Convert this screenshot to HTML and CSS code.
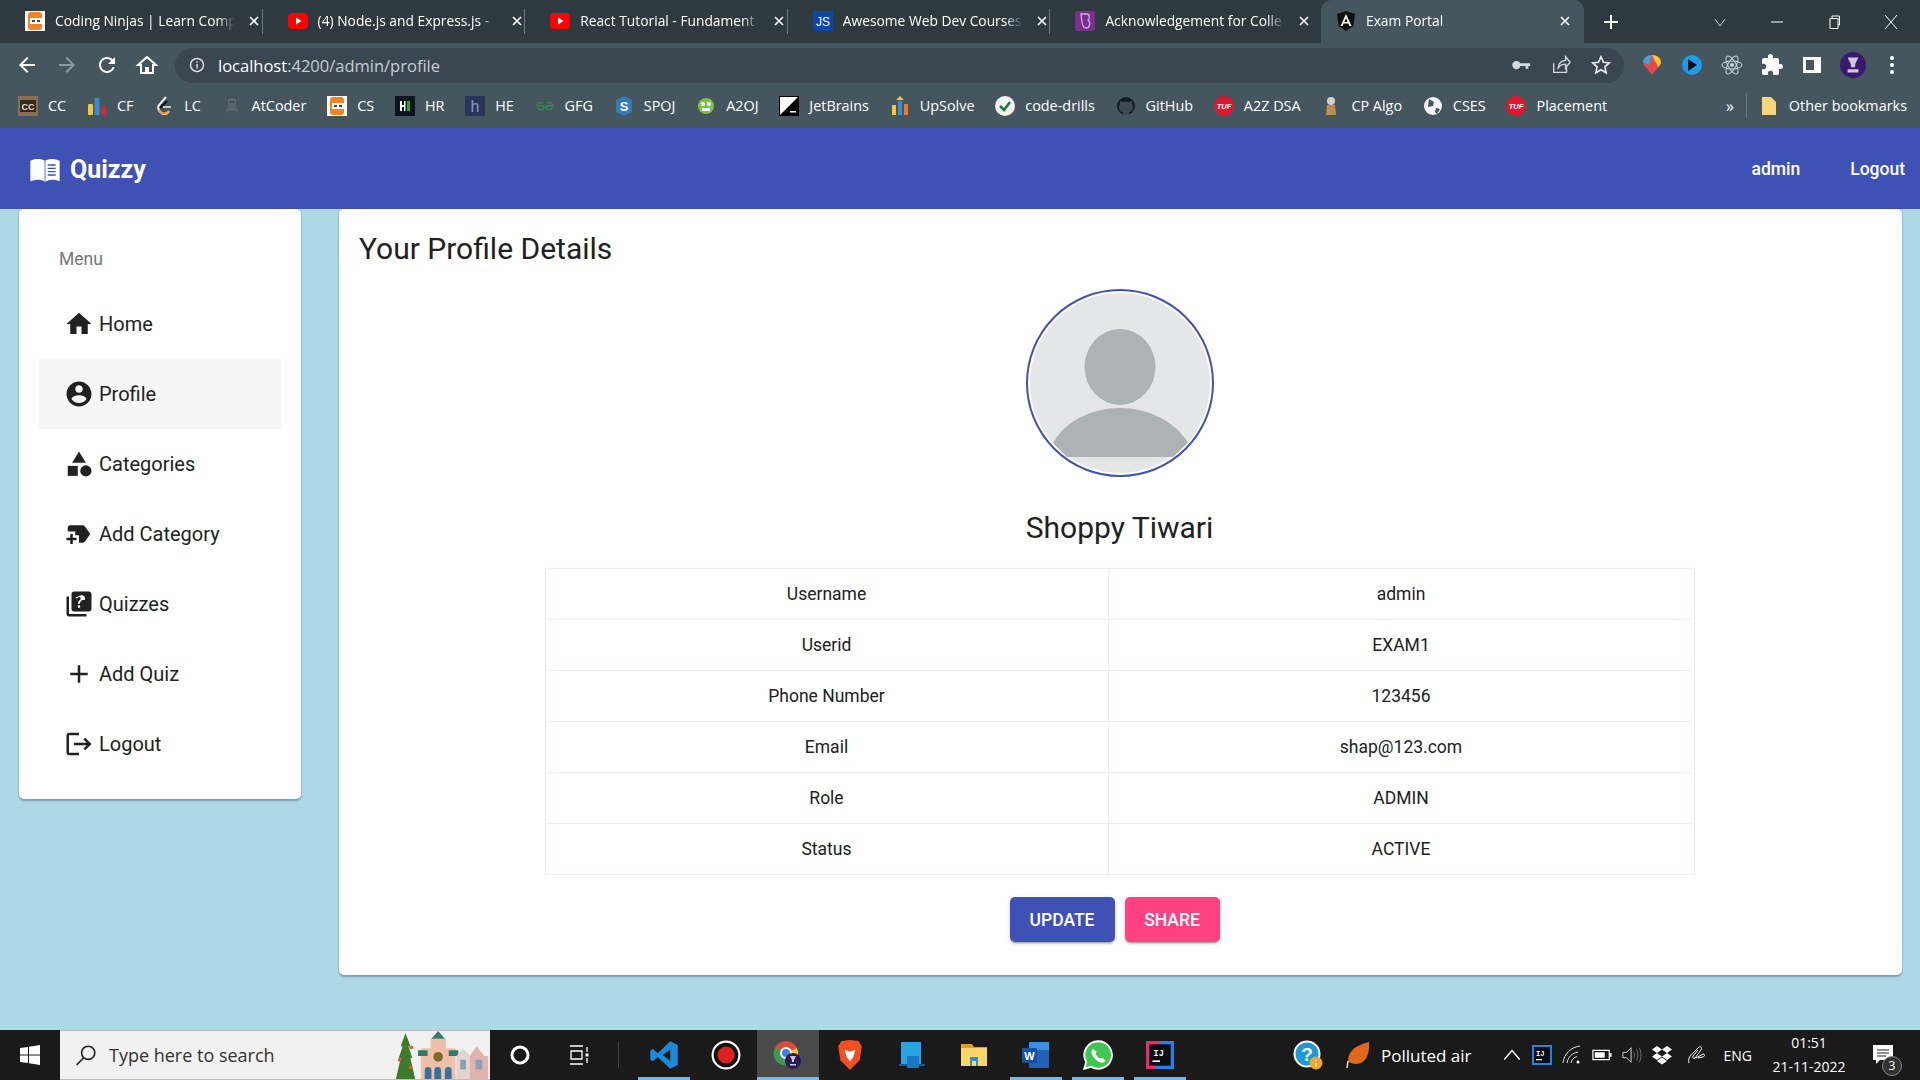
FILE: index.html
```html
<!DOCTYPE html>
<html lang="en">
<head>
  <meta charset="UTF-8">
  <meta name="viewport" content="width=device-width, initial-scale=1.0">
  <title>Exam Portal</title>
  <link rel="stylesheet" href="styles.css">
</head>
<body>

<svg class="defs" width="0" height="0">
  <symbol id="ic-ninja" viewBox="0 0 20 20"><rect width="20" height="20" fill="#fff"/><rect x="3" y="1" width="14" height="18" rx="3" fill="#f58220"/><rect x="5" y="7" width="15" height="6" fill="#fff"/><path d="M7 9h3v2H7zM12 9h3v2h-3z" fill="#444"/></symbol>
  <symbol id="ic-yt" viewBox="0 0 20 20"><rect y="2" width="20" height="16" rx="4" fill="#f00"/><path d="M8 6.500l5.500 3.500L8 13.500z" fill="#fff"/></symbol>
  <symbol id="ic-tuf" viewBox="0 0 20 20"><circle cx="10" cy="10" r="10" fill="#e2162f"/><text x="10" y="12.500" font-size="7.500" font-weight="700" font-style="italic" fill="#fff" text-anchor="middle" font-family="Liberation Sans">TUF</text></symbol>
  <symbol id="ic-close" viewBox="0 0 12 12"><path d="M2 2l8 8M10 2l-8 8" stroke="#fff" stroke-width="1.600" fill="none"/></symbol>
</svg>

<div class="tabstrip">
  <div class="tab"><svg class="fav"><use href="#ic-ninja"/></svg><span class="tab-title">Coding Ninjas | Learn Comp</span><svg class="tab-x"><use href="#ic-close"/></svg></div>
  <div class="tab"><svg class="fav"><use href="#ic-yt"/></svg><span class="tab-title">(4) Node.js and Express.js -</span><svg class="tab-x"><use href="#ic-close"/></svg></div>
  <div class="tab"><svg class="fav"><use href="#ic-yt"/></svg><span class="tab-title">React Tutorial - Fundament</span><svg class="tab-x"><use href="#ic-close"/></svg></div>
  <div class="tab">
    <svg class="fav" viewBox="0 0 20 20"><rect width="20" height="20" fill="#0a47a8"/><text x="10" y="15" font-size="12" fill="#fff" text-anchor="middle" font-family="Liberation Sans">JS</text></svg>
    <span class="tab-title">Awesome Web Dev Courses</span><svg class="tab-x"><use href="#ic-close"/></svg>
  </div>
  <div class="tab tab-nosep">
    <svg class="fav" viewBox="0 0 20 20"><rect width="20" height="20" rx="2" fill="#7b2f8e"/><path d="M6 3h6c3 0 3 5 1 6 3 2 2 8-2 8-3 0-4-3-5-14z" fill="none" stroke="#d9a9e6" stroke-width="1.300"/></svg>
    <span class="tab-title">Acknowledgement for Colle</span><svg class="tab-x"><use href="#ic-close"/></svg>
  </div>
  <div class="tab tab-active">
    <svg class="fav" viewBox="0 0 20 20"><path d="M10 0l9 3-1.500 12L10 20l-7.500-5L1 3z" fill="#111"/><path d="M10 3l5.500 12h-2l-1-2.500h-5l-1 2.500h-2zM10 7l-1.700 4h3.400z" fill="#fff"/></svg>
    <span class="tab-title">Exam Portal</span><svg class="tab-x"><use href="#ic-close"/></svg>
  </div>
  <svg class="newtab" viewBox="0 0 16 16"><path d="M8 1v14M1 8h14" stroke="#fff" stroke-width="2"/></svg>
  <div class="winctl">
    <svg class="win-ic win-chev" viewBox="0 0 14 14"><path d="M2 4l5 7 5-7" stroke="#c9d0d4" fill="none"/></svg>
    <svg class="win-ic" viewBox="0 0 14 14"><path d="M1 7h12" stroke="#fff"/></svg>
    <svg class="win-ic" viewBox="0 0 14 14"><path d="M3 3.500h8v10H3zM5 3.500V1h7.500v9H11" stroke="#fff" fill="none"/></svg>
    <svg class="win-ic win-x" viewBox="0 0 14 14"><path d="M1 0l12 14M13 0L1 14" stroke="#fff" fill="none"/></svg>
  </div>
</div>

<div class="toolbar">
  <svg class="tool" viewBox="0 0 24 24"><path d="M20 11H7.800l5.600-5.600L12 4l-8 8 8 8 1.400-1.400L7.800 13H20z" fill="#fff"/></svg>
  <svg class="tool" viewBox="0 0 24 24"><path d="M4 11h12.200l-5.600-5.600L12 4l8 8-8 8-1.400-1.400 5.600-5.600H4z" fill="#8e9aa1"/></svg>
  <svg class="tool" viewBox="0 0 24 24"><path d="M17.650 6.350A8 8 0 1 0 19.700 14h-2.100A6 6 0 1 1 12 6c1.660 0 3.140.69 4.220 1.780L13 11h7V4z" fill="#fff"/></svg>
  <svg class="tool" viewBox="0 0 24 24"><path d="M12 4l-9 8h3v8h5v-5h2v5h5v-8h3z" fill="none" stroke="#fff" stroke-width="2"/></svg>
  <div class="omnibox">
    <svg class="omni-info" viewBox="0 0 16 16"><circle cx="8" cy="8" r="6.500" fill="none" stroke="#d5dadd" stroke-width="1.500"/><path d="M8 7v4.500M8 4.500v1.500" stroke="#d5dadd" stroke-width="1.500"/></svg>
    <span class="url"><span class="url-host">localhost</span>:4200/admin/profile</span>
    <div class="omni-right">
      <svg class="omni-ic" viewBox="0 0 24 24"><circle cx="7" cy="12" r="4.500" fill="#d5dadd"/><path d="M10 10h12v3h-2v3h-3v-3h-7z" fill="#d5dadd"/></svg>
      <svg class="omni-ic" viewBox="0 0 24 24"><path d="M4 10v10h14v-5M9 15c0-5 4-8 8-8V3l5 6-5 6v-4c-3 0-6 1-8 4z" fill="none" stroke="#d5dadd" stroke-width="1.500"/></svg>
      <svg class="omni-ic" viewBox="0 0 24 24"><path d="M12 3l2.700 6 6.300.7-4.700 4.300 1.300 6.500-5.600-3.300-5.600 3.300 1.300-6.500L3 9.700 9.300 9z" fill="none" stroke="#e8ecee" stroke-width="1.800"/></svg>
    </div>
  </div>
  <div class="ext-row">
    <svg class="ext" viewBox="0 0 24 24"><path d="M12 22C8 16 3 13 3 9a9 7 0 0 1 18 0c0 4-5 7-9 13z" fill="#e5484d"/><path d="M12 2a9 7 0 0 1 9 7c0 2-1 3-3 5L12 2z" fill="#f7c52d"/><path d="M3 9a9 7 0 0 1 9-7l-3 10z" fill="#3aa6dd"/></svg>
    <svg class="ext" viewBox="0 0 24 24"><circle cx="12" cy="12" r="10" fill="#1a9bf0"/><path d="M8 6l9 6-9 6z" fill="#111"/></svg>
    <svg class="ext" viewBox="0 0 24 24"><g fill="none" stroke="#cfd6da"><ellipse cx="12" cy="12" rx="10" ry="4"/><ellipse cx="12" cy="12" rx="10" ry="4" transform="rotate(60 12 12)"/><ellipse cx="12" cy="12" rx="10" ry="4" transform="rotate(120 12 12)"/></g><circle cx="12" cy="12" r="2" fill="#cfd6da"/></svg>
    <svg class="ext" viewBox="0 0 24 24"><path d="M20.500 11H19V7c0-1.100-.9-2-2-2h-4V3.500a2.500 2.500 0 0 0-5 0V5H4c-1.100 0-2 .9-2 2v3.800h1.500a2.700 2.700 0 0 1 0 5.400H2V20c0 1.100.9 2 2 2h3.800v-1.500a2.700 2.700 0 0 1 5.400 0V22H17c1.100 0 2-.9 2-2v-4h1.500a2.500 2.500 0 0 0 0-5z" fill="#fff"/></svg>
    <svg class="ext" viewBox="0 0 24 24"><path d="M3 4h18v16H3zM6 7v10h8V7z" fill="#fff" fill-rule="evenodd"/></svg>
    <svg class="ext ext-avatar" viewBox="0 0 24 24"><circle cx="12" cy="12" r="12" fill="#3a1a6e"/><path d="M7 5h10l-3 6v3h-4v-3zM7 16h10v3H7z" fill="#cfc8dc"/></svg>
    <svg class="ext ext-kebab" viewBox="0 0 24 24"><circle cx="12" cy="5" r="2" fill="#fff"/><circle cx="12" cy="12" r="2" fill="#fff"/><circle cx="12" cy="19" r="2" fill="#fff"/></svg>
  </div>
</div>

<div class="bookmarks">
  <span class="bm"><svg class="bm-ic" viewBox="0 0 20 20"><rect width="20" height="20" fill="#8a6f52"/><rect x="2" y="4" width="16" height="12" fill="#332a20"/><text x="10" y="14" font-size="9" font-weight="700" fill="#e7ddd0" text-anchor="middle" font-family="Liberation Sans">CC</text></svg>CC</span>
  <span class="bm"><svg class="bm-ic" viewBox="0 0 20 20"><rect x="1" y="8" width="5" height="11" rx="1" fill="#f6c43d"/><rect x="7.500" y="2" width="5" height="17" rx="1" fill="#3b8ad6"/><rect x="14" y="10" width="5" height="9" rx="1" fill="#c62e2e"/></svg>CF</span>
  <span class="bm"><svg class="bm-ic" viewBox="0 0 20 20"><path d="M12 1L5 9c-2 3 0 8 5 9 2 0 4-1 5-3" fill="none" stroke="#f2f2f2" stroke-width="2"/><path d="M13 5L6 12" stroke="#111" stroke-width="2"/><path d="M9 11h8" stroke="#c9c9c9" stroke-width="2"/><path d="M5 14c2 4 7 5 10 1" fill="none" stroke="#f29c1f" stroke-width="2"/></svg>LC</span>
  <span class="bm"><svg class="bm-ic" viewBox="0 0 20 20"><circle cx="10" cy="6" r="4" fill="#5f6a70"/><path d="M3 18l4-10h6l4 10-4-3H7z" fill="#59646a"/><circle cx="8.500" cy="6" r="1" fill="#2e363a"/><circle cx="11.500" cy="6" r="1" fill="#2e363a"/></svg>AtCoder</span>
  <span class="bm"><svg class="bm-ic"><use href="#ic-ninja"/></svg>CS</span>
  <span class="bm"><svg class="bm-ic" viewBox="0 0 20 20"><rect width="20" height="20" fill="#0e141e"/><path d="M5 5h2v10H5zM9 5h1.500v10H9zM5 9h5v2H5z" fill="#fff"/><rect x="12" y="5" width="3" height="10" fill="#1ba94c"/></svg>HR</span>
  <span class="bm"><svg class="bm-ic" viewBox="0 0 20 20"><rect width="20" height="20" fill="#2a3459"/><text x="10" y="16" font-size="16" fill="#8e9ac0" text-anchor="middle" font-family="Liberation Sans">h</text></svg>HE</span>
  <span class="bm"><svg class="bm-ic" viewBox="0 0 20 20"><g fill="none" stroke="#2f8d46" stroke-width="1.500"><path d="M9 10H2a4 4 0 0 1 6-3M2.500 12a4 4 0 0 0 6.500 0v-2"/><path d="M11 10h7a4 4 0 0 0-6-3M17.500 12a4 4 0 0 1-6.500 0v-2"/></g></svg>GFG</span>
  <span class="bm"><svg class="bm-ic" viewBox="0 0 20 20"><path d="M10 0l8 4v12l-8 4-8-4V4z" fill="#337ab7"/><text x="10" y="15" font-size="13" font-weight="700" fill="#fff" text-anchor="middle" font-family="Liberation Sans">S</text></svg>SPOJ</span>
  <span class="bm"><svg class="bm-ic" viewBox="0 0 20 20"><circle cx="10" cy="10" r="8" fill="#7ec242"/><circle cx="7" cy="8" r="2" fill="#fff"/><circle cx="13" cy="8" r="2" fill="#fff"/><rect x="6" y="12" width="8" height="3" fill="#fff"/></svg>A2OJ</span>
  <span class="bm"><svg class="bm-ic" viewBox="0 0 20 20"><rect width="20" height="20" fill="#000"/><path d="M1 1h18L1 19z" fill="#fff"/><rect x="11" y="15" width="6" height="1.500" fill="#fff"/></svg>JetBrains</span>
  <span class="bm"><svg class="bm-ic" viewBox="0 0 20 20"><rect x="2" y="9" width="4" height="10" fill="#f6c43d"/><rect x="8" y="5" width="4" height="14" fill="#3b8ad6"/><rect x="14" y="8" width="4" height="11" fill="#e8792b"/><path d="M10 0l4 4h-8z" fill="#f6c43d"/></svg>UpSolve</span>
  <span class="bm"><svg class="bm-ic" viewBox="0 0 20 20"><circle cx="10" cy="10" r="10" fill="#f2f2f2"/><path d="M5 10l4 4 6-8" fill="none" stroke="#1d7a3a" stroke-width="2.500"/></svg>code-drills</span>
  <span class="bm"><svg class="bm-ic" viewBox="0 0 20 20"><circle cx="10" cy="10" r="9" fill="#171b1f"/><path d="M7 19v-3c-3 0-4-2-4-5 0-1 .5-2 1-3V5l3 1c2-.5 4-.5 6 0l3-1v3c.5 1 1 2 1 3 0 3-1 5-4 5v3z" fill="#3c4a52"/></svg>GitHub</span>
  <span class="bm"><svg class="bm-ic"><use href="#ic-tuf"/></svg>A2Z DSA</span>
  <span class="bm"><svg class="bm-ic" viewBox="0 0 20 20"><circle cx="10" cy="5" r="4" fill="#d7cfc4"/><path d="M6 9h8l1 10H5z" fill="#b98e55"/></svg>CP Algo</span>
  <span class="bm"><svg class="bm-ic" viewBox="0 0 20 20"><circle cx="10" cy="10" r="9" fill="#f2f2f2"/><path d="M6 3l5 3-1 4-5 1zM13 12l4 1-3 5-2-2z" fill="#44565f"/></svg>CSES</span>
  <span class="bm"><svg class="bm-ic"><use href="#ic-tuf"/></svg>Placement</span>
  <div class="bm-end">
    <span class="bm-more">»</span>
    <span class="bm-sep"></span>
    <span class="bm"><svg class="bm-ic" viewBox="0 0 20 20"><path d="M3 1h9l5 5v13H3z" fill="#f6d67a"/></svg>Other bookmarks</span>
  </div>
</div>

<nav class="navbar">
  <svg class="brand-ic" viewBox="0 0 24 24"><path d="M21 5c-1.100-.35-2.300-.5-3.500-.5-1.950 0-4.050.4-5.500 1.500-1.450-1.100-3.550-1.500-5.500-1.500S2.450 4.900 1 6v14.650c0 .25.250.5.5.5.100 0 .150-.05.250-.05C3.100 20.450 5.050 20 6.500 20c1.950 0 4.050.4 5.500 1.500 1.350-.85 3.800-1.500 5.500-1.500 1.650 0 3.350.3 4.750 1.050.1.05.15.05.25.05.25 0 .5-.25.5-.5V6c-.6-.45-1.250-.75-2-1z" fill="#fff"/><path d="M14 9h6M14 11.500h6M14 14h6M14 16.500h6" stroke="#3f51b5"/><path d="M12 6v15" stroke="#3f51b5" stroke-width=".6"/></svg>
  <span class="brand">Quizzy</span>
  <span class="nav-link nav-admin">admin</span>
  <span class="nav-link">Logout</span>
</nav>

<div class="page">
  <aside class="sidebar">
    <div class="menu-label">Menu</div>
    <div class="menu-item"><svg class="menu-ic" viewBox="0 0 24 24"><path d="M10 20v-6h4v6h5v-8h3L12 3 2 12h3v8z"/></svg>Home</div>
    <div class="menu-item menu-active"><svg class="menu-ic" viewBox="0 0 24 24"><path d="M12 2C6.480 2 2 6.480 2 12s4.480 10 10 10 10-4.480 10-10S17.520 2 12 2zm0 3c1.660 0 3 1.340 3 3s-1.340 3-3 3-3-1.340-3-3 1.340-3 3-3zm0 14.200c-2.500 0-4.710-1.280-6-3.220.03-1.990 4-3.080 6-3.080 1.990 0 5.970 1.090 6 3.080-1.290 1.940-3.500 3.220-6 3.220z"/></svg>Profile</div>
    <div class="menu-item"><svg class="menu-ic" viewBox="0 0 24 24"><path d="M12 2l-5.500 9h11z"/><circle cx="17.500" cy="17.500" r="4.500"/><path d="M3 13.500h8v8H3z"/></svg>Categories</div>
    <div class="menu-item"><svg class="menu-ic" viewBox="0 0 24 24"><path d="M21 12l-4.370 6.160c-.37.520-.98.840-1.630.840h-3v-6H9v-3H3V7c0-1.100.9-2 2-2h10c.650 0 1.260.320 1.630.840L21 12zM10 15H7v-3H5v3H2v2h3v3h2v-3h3v-2z"/></svg>Add Category</div>
    <div class="menu-item"><svg class="menu-ic" viewBox="0 0 24 24"><path d="M4 6H2v14c0 1.100.9 2 2 2h14v-2H4V6zm16-4H8c-1.100 0-2 .9-2 2v12c0 1.100.9 2 2 2h12c1.100 0 2-.9 2-2V4c0-1.100-.9-2-2-2zm-7.990 13c-.59 0-1.050-.47-1.050-1.050 0-.59.47-1.040 1.050-1.040.59 0 1.040.45 1.040 1.040-.01.58-.45 1.050-1.040 1.050zm2.500-6.170c-.63.930-1.230 1.210-1.560 1.810-.13.240-.18.400-.18 1.180h-1.520c0-.41-.06-1.080.26-1.650.41-.73 1.180-1.160 1.630-1.800.48-.68.210-1.940-1.140-1.940-.88 0-1.320.67-1.500 1.230l-1.370-.57C11.510 5.960 12.520 5 13.990 5c1.230 0 2.080.56 2.510 1.260.37.610.58 1.730.01 2.570z"/></svg>Quizzes</div>
    <div class="menu-item"><svg class="menu-ic" viewBox="0 0 24 24"><path d="M19 13h-6v6h-2v-6H5v-2h6V5h2v6h6v2z"/></svg>Add Quiz</div>
    <div class="menu-item"><svg class="menu-ic" viewBox="0 0 24 24"><path d="M17 7l-1.410 1.410L18.170 11H8v2h10.170l-2.580 2.580L17 17l5-5zM4 5h8V3H4c-1.100 0-2 .9-2 2v14c0 1.100.9 2 2 2h8v-2H4V5z"/></svg>Logout</div>
  </aside>

  <main class="card">
    <h1 class="card-title">Your Profile Details</h1>
    <div class="avatar">
      <svg viewBox="0 0 180 180" class="avatar-svg">
        <circle cx="90" cy="90" r="90" fill="#e4e6e8"/>
        <ellipse cx="90" cy="74" rx="35.500" ry="38" fill="#adb2b5"/>
        <path d="M23 150C35 128 62 115 90 115s55 13 68 35l-15 14H37z" fill="#adb2b5"/>
      </svg>
    </div>
    <h2 class="name">Shoppy Tiwari</h2>
    <table class="details">
      <tbody>
        <tr><td>Username</td><td>admin</td></tr>
        <tr><td>Userid</td><td>EXAM1</td></tr>
        <tr><td>Phone Number</td><td>123456</td></tr>
        <tr><td>Email</td><td>shap@123.com</td></tr>
        <tr><td>Role</td><td>ADMIN</td></tr>
        <tr><td>Status</td><td>ACTIVE</td></tr>
      </tbody>
    </table>
    <div class="actions">
      <button class="btn btn-primary">UPDATE</button>
      <button class="btn btn-accent">SHARE</button>
    </div>
  </main>
</div>

<footer class="taskbar">
  <div class="start"><svg class="start-ic" viewBox="0 0 20 20"><path d="M0 3l8-1v7.500H0zM9 1.800L20 0v9.500H9zM0 10.500h8V18l-8-1zM9 10.500h11V20L9 18.200z" fill="#fff"/></svg></div>
  <div class="search">
    <svg class="search-ic" viewBox="0 0 20 20"><circle cx="12" cy="8" r="6" fill="none" stroke="#222" stroke-width="1.500"/><path d="M8 12.500L1.500 19" stroke="#222" stroke-width="1.500"/></svg>
    <span class="search-text">Type here to search</span>
    <svg class="search-art" viewBox="0 0 95 50">
      <path d="M9 2l5 14h-2l4 12h-2l5 22H-1l5-22H2l4-12H4z" fill="#3d7a2a"/>
      <circle cx="15" cy="17" r="2" fill="#e2562d"/><circle cx="3" cy="30" r="2" fill="#e2562d"/><circle cx="14" cy="38" r="2" fill="#e2562d"/>
      <path d="M25 18h36v32H25z" fill="#eec0a8"/><path d="M35 8h16v12H35z" fill="#eec0a8"/><path d="M43 0l7 8H36z" fill="#2e7d6f"/><path d="M22 20h10v6H22zM54 20h10v6H54z" fill="#2e7d6f"/>
      <circle cx="43" cy="27" r="5" fill="#7b6a2a"/><path d="M29 50v-9a3 3 0 0 1 7 0v9zM39 50v-9a3 3 0 0 1 7 0v9zM50 50v-9a3 3 0 0 1 7 0v9z" fill="#3a6f9c"/>
      <path d="M62 50V26l7-8 7 8v24z" fill="#e4d4cf"/><path d="M76 50V26l7-10 8 10h4v24z" fill="#e0b3ae"/><path d="M66 30h6v10h-6zM82 30h7v10h-7z" fill="#8aa0b5"/>
    </svg>
  </div>
  <div class="task-cell task-small"><svg class="task-ic-sm" viewBox="0 0 20 20"><circle cx="10" cy="10" r="8" fill="none" stroke="#fff" stroke-width="3"/></svg></div>
  <div class="task-cell task-small"><svg class="task-ic-sm" viewBox="0 0 20 20"><path d="M1 1h13M1 19h13M2 6h11v8H2zM18 2v5M18 13v5" fill="none" stroke="#fff" stroke-width="1.300"/><rect x="16.500" y="8.500" width="3" height="3" fill="#fff"/></svg></div>
  <span class="task-sep"></span>
  <div class="task-cell task-open"><svg class="task-ic" viewBox="0 0 24 24"><path d="M17 1l6 3v16l-6 3-10-9.500L3 17l-2-1.500v-7L3 7l4 3.500zm0 6.500L11 12l6 4.500z" fill="#1c8ad8"/></svg></div>
  <div class="task-cell"><svg class="task-ic" viewBox="0 0 28 28"><circle cx="14" cy="14" r="12.500" fill="#111" stroke="#fff" stroke-width="2"/><circle cx="14" cy="14" r="8" fill="#e02020"/></svg></div>
  <div class="task-cell task-open task-active"><svg class="task-ic" viewBox="0 0 30 30"><circle cx="13" cy="13" r="12" fill="#d94c3d"/><path d="M13 13L24 8a12 12 0 0 1-4 15z" fill="#f5c33b"/><path d="M13 13l7 10A12 12 0 0 1 2 8z" fill="#3c9c4e"/><circle cx="13" cy="13" r="5" fill="#3d7fe0" stroke="#fff" stroke-width="2"/><circle cx="20" cy="21" r="8" fill="#2e1a56"/><path d="M17 16h6l-2 4v2h-2v-2zM17 24h6v1.500h-6z" fill="#cfc8dc"/></svg></div>
  <div class="task-cell"><svg class="task-ic" viewBox="0 0 24 28"><path d="M12 0l8 1 3 5-2 13-9 9-9-9L1 6l3-5z" fill="#f04e23"/><path d="M7 9l5 2 5-2-2 7-3 4-3-4z" fill="#fff"/></svg></div>
  <div class="task-cell"><svg class="task-ic" viewBox="0 0 30 30"><path d="M4 2h20v24H4z" fill="#2aa3e0"/><path d="M2 24h26v2H2z" fill="#0d5f9e"/><path d="M10 16h12v12H10z" fill="#1679c2"/></svg></div>
  <div class="task-cell"><svg class="task-ic" viewBox="0 0 30 30"><path d="M2 4h11l2 3h13v19H2z" fill="#e0a21c"/><path d="M2 8h26v18H2z" fill="#fcd56a"/><path d="M11 17h8v9h-2v-5h-4v5h-2z" fill="#2c8fd6"/></svg></div>
  <div class="task-cell task-open"><svg class="task-ic" viewBox="0 0 30 30"><rect x="8" y="2" width="20" height="26" rx="1" fill="#1f63b8"/><rect x="8" y="2" width="20" height="8" fill="#3f8fe0"/><rect x="1" y="8" width="15" height="15" rx="1" fill="#174fa3"/><text x="8.500" y="20" font-size="11" font-weight="700" fill="#fff" text-anchor="middle" font-family="Liberation Sans">W</text></svg></div>
  <div class="task-cell task-open"><svg class="task-ic" viewBox="0 0 24 24"><path d="M12 1a11 11 0 0 0-9.400 16.600L1 23l5.600-1.500A11 11 0 1 0 12 1z" fill="#43c553" stroke="#fff" stroke-width="1.500"/><path d="M8 7c-1 1-1.500 2-1 4 1 3 4 6 7 7 2 .5 3-.5 4-1.500l-2.500-2.500-1.500 1c-2-1-3-2-4-4l1-1.500z" fill="#fff"/></svg></div>
  <div class="task-cell task-open"><svg class="task-ic" viewBox="0 0 28 28"><rect x="1" y="1" width="26" height="26" fill="#e3336e"/><path d="M14 1h13v26H10z" fill="#2a7fe0"/><rect x="4" y="4" width="20" height="20" fill="#0c0c14"/><text x="8" y="15" font-size="8" font-weight="700" fill="#fff" font-family="Liberation Mono">IJ</text><rect x="7" y="19" width="7" height="1.500" fill="#fff"/></svg></div>
  <div class="tray">
    <svg class="help-ic" viewBox="0 0 30 30"><circle cx="14" cy="14" r="12.500" fill="#1c9ad6" stroke="#fff" stroke-width="2"/><text x="14" y="21" font-size="19" font-weight="700" fill="#fff" text-anchor="middle" font-family="Liberation Sans">?</text><circle cx="23" cy="23" r="6.500" fill="#f5a623"/><path d="M23 20v1M23 23v3.500" stroke="#fff" stroke-width="1.500"/></svg>
    <svg class="leaf-ic" viewBox="0 0 28 28"><path d="M26 1c1 13-4 22-13 22-3 0-6-1-8-3C5 9 14 4 26 1z" fill="#e0691e"/><path d="M5 20l-1 7" stroke="#e8e2dc" stroke-width="1.500"/></svg>
    <span class="air">Polluted air</span>
    <svg class="tray-ic tray-chev" viewBox="0 0 18 18"><path d="M2 13l7-8 7 8" fill="none" stroke="#fff" stroke-width="1.300"/></svg>
    <svg class="tray-ic" viewBox="0 0 20 20"><rect width="20" height="20" fill="#2a7fe0"/><rect x="2" y="2" width="16" height="16" fill="#0c0c14"/><text x="4" y="11" font-size="7" font-weight="700" fill="#fff" font-family="Liberation Mono">IJ</text><rect x="4" y="14" width="6" height="1.300" fill="#fff"/></svg>
    <svg class="tray-ic" viewBox="0 0 20 20"><g fill="none" stroke="#ddd"><path d="M1 18C2 9 9 2 18 1"/><path d="M5 18c1-6 5-10 11-11"/><path d="M9 18c.5-3 3-6 6-6.500"/></g><circle cx="16" cy="17" r="1.500" fill="#fff"/></svg>
    <svg class="tray-ic" viewBox="0 0 22 20"><path d="M1 5h18v10H1z" fill="none" stroke="#fff" stroke-width="1.300"/><rect x="3" y="7" width="11" height="6" fill="#fff"/><rect x="19.500" y="8" width="2" height="4" fill="#fff"/></svg>
    <svg class="tray-ic" viewBox="0 0 22 20"><path d="M1 7h4l5-5v16l-5-5H1z" fill="none" stroke="#ddd"/><path d="M13 7c1 2 1 4 0 6M16 4c2 4 2 8 0 12M19 2c2.500 5 2.500 11 0 16" fill="none" stroke="#777"/></svg>
    <svg class="tray-ic" viewBox="0 0 20 20"><path d="M5 1L0 4.500 5 8l5-3.500zM15 1l-5 3.500L15 8l5-3.500zM0 11.500L5 15l5-3.500L5 8zM15 8l-5 3.500 5 3.500 5-3.500zM5 16l5 3.500 5-3.500-5-3.500z" fill="#fff"/></svg>
    <svg class="tray-ic tray-pen" viewBox="0 0 20 20"><path d="M3 18c-1-3 0-7 4-10l6-6c2-1 3 1 2 3l-6 8c-1 1-3 0-2-2l5-6M10 13l7-4c2 0 2 2 0 3l-5 1" fill="none" stroke="#fff"/></svg>
    <span class="lang">ENG</span>
    <div class="clock"><span>01:51</span><span>21-11-2022</span></div>
    <div class="notif">
      <svg class="notif-ic" viewBox="0 0 22 22"><path d="M1 1h20v15H8l-4 4v-4H1z" fill="#fff"/><path d="M5 6h12M5 9h12M5 12h9" stroke="#222"/></svg>
      <span class="notif-badge">3</span>
    </div>
  </div>
</footer>

</body>
</html>
```

FILE: styles.css
```css
* {
  box-sizing: border-box;
}

html, body {
  margin: 0;
  height: 1080px;
  overflow: hidden;
}

body {
  display: flex;
  flex-direction: column;
  background-color: #add8e6;
  font-family: Roboto, "Liberation Sans", sans-serif;
  color: #212121;
}

.defs {
  display: none;
}

/* browser chrome */
.tabstrip {
  height: 43px;
  display: flex;
  align-items: center;
  background-color: #2f3a40;
  font-family: "Open Sans", "Liberation Sans", sans-serif;
  font-size: 13.800px;
  color: #fff;
}

.tab {
  width: 262.600px;
  height: 43px;
  flex: none;
  display: flex;
  align-items: center;
  padding: 0 0 2px 25px;
  position: relative;
}

.tab::after {
  content: "";
  position: absolute;
  right: 0;
  top: 9px;
  width: 1px;
  height: 25px;
  background-color: #6b7a82;
}

.tab-nosep::after,
.tab-active::after {
  display: none;
}

.tab-active {
  width: 263px;
  margin-left: 8px;
  padding-left: 15px;
  background-color: #45565f;
  border-radius: 10px 10px 0 0;
}

.fav {
  width: 20px;
  height: 20px;
  flex: none;
  margin-right: 10px;
}

.tab-title {
  width: 180px;
  white-space: nowrap;
  overflow: hidden;
  -webkit-mask-image: linear-gradient(to right, #000 90%, transparent);
  mask-image: linear-gradient(to right, #000 90%, transparent);
}

.tab-x {
  width: 12px;
  height: 12px;
  margin-left: 13px;
}

.newtab {
  width: 16px;
  height: 16px;
  margin-left: 19px;
}

.winctl {
  margin-left: auto;
  display: flex;
  align-items: center;
  padding-right: 22px;
  gap: 43px;
}

.win-ic {
  width: 14px;
  height: 14px;
}

.toolbar {
  height: 43px;
  display: flex;
  align-items: center;
  background-color: #45565f;
  padding-left: 15px;
  gap: 16px;
}

.tool {
  width: 24px;
  height: 24px;
  flex: none;
}

.omnibox {
  width: 1449px;
  height: 35px;
  margin-top: 1px;
  flex: none;
  display: flex;
  align-items: center;
  padding-left: 14px;
  background-color: #3a4750;
  border-radius: 18px;
  font-family: "Open Sans", "Liberation Sans", sans-serif;
  font-size: 16.500px;
  color: #c5cdd2;
}

.omni-info {
  width: 16px;
  height: 16px;
  margin-right: 13px;
}

.url-host {
  color: #fff;
}

.omni-right {
  margin-left: auto;
  display: flex;
  gap: 18px;
  padding-right: 12px;
}

.omni-ic {
  width: 22px;
  height: 22px;
}

.ext-row {
  display: flex;
  align-items: center;
  gap: 16px;
}

.ext {
  width: 24px;
  height: 24px;
}

.ext-avatar {
  width: 26px;
  height: 26px;
}

.ext-kebab {
  margin-left: -2px;
}

.bookmarks {
  height: 42px;
  display: flex;
  align-items: center;
  gap: 20.800px;
  padding: 0 0 3px 18px;
  background-color: #45565f;
  font-family: "Open Sans", "Liberation Sans", sans-serif;
  font-size: 14.400px;
  color: #fff;
}

.bm {
  display: flex;
  align-items: center;
  gap: 10px;
  white-space: nowrap;
}

.bm-ic {
  width: 20px;
  height: 20px;
  flex: none;
}

.bm-end {
  margin-left: auto;
  display: flex;
  align-items: center;
  padding-right: 13px;
}

.bm-more {
  font-size: 16px;
  margin-right: 12px;
}

.bm-sep {
  width: 1px;
  height: 25px;
  background-color: #6b7a82;
  margin-right: 12px;
}

/* app */
.navbar {
  height: 81px;
  display: flex;
  align-items: center;
  background-color: #3f51b5;
  color: #fff;
  padding: 0 15px 0 29px;
}

.brand-ic {
  width: 32px;
  height: 32px;
  margin-right: 9px;
}

.brand {
  font-size: 25px;
  font-weight: 700;
  margin: 2px auto 0 0;
}

.nav-link {
  font-size: 17.500px;
  font-weight: 500;
}

.nav-admin {
  margin-right: 50px;
}

.page {
  flex: 1;
  display: flex;
  align-items: flex-start;
  padding-left: 19px;
  gap: 38px;
}

.sidebar {
  width: 282px;
  padding: 21px 20px 20px;
  background-color: #fff;
  border-radius: 5px;
  box-shadow: 0 2px 2px rgba(0, 0, 0, .25), 0 0 2px rgba(0, 0, 0, .12);
}

.menu-label {
  height: 59px;
  line-height: 59px;
  padding-left: 20px;
  font-size: 17.500px;
  color: #757575;
}

.menu-item {
  height: 70px;
  display: flex;
  align-items: center;
  gap: 5px;
  padding-left: 25px;
  font-size: 20px;
}

.menu-active {
  background-color: #f5f5f5;
}

.menu-ic {
  width: 30px;
  height: 30px;
  flex: none;
  fill: #212121;
}

.card {
  width: 1563px;
  height: 766px;
  display: flex;
  flex-direction: column;
  align-items: center;
  padding: 21px 22px 0 20px;
  background-color: #fff;
  border-radius: 5px;
  box-shadow: 0 2px 2px rgba(0, 0, 0, .25), 0 0 2px rgba(0, 0, 0, .12);
}

.card-title {
  align-self: flex-start;
  margin: 0;
  height: 38px;
  line-height: 38px;
  font-size: 30px;
  font-weight: 400;
}

.avatar {
  width: 188px;
  height: 188px;
  margin-top: 21px;
  padding: 2px;
  border: 2px solid #3f51b5;
  border-radius: 50%;
}

.avatar-svg {
  display: block;
  width: 100%;
  height: 100%;
}

.name {
  margin: 29px 0 18px;
  height: 44px;
  line-height: 44px;
  font-size: 30px;
  font-weight: 400;
}

.details {
  width: 1150px;
  border-collapse: collapse;
  table-layout: fixed;
  font-size: 17.500px;
}

.details td {
  height: 51px;
  padding: 0;
  text-align: center;
  border: 1px solid #f9e8ea;
}

.details td:first-child {
  width: 563px;
}

.actions {
  display: flex;
  gap: 10px;
  margin: 22px 10px 0 0;
}

.btn {
  height: 45px;
  border: none;
  border-radius: 5px;
  font-family: inherit;
  font-size: 17.500px;
  font-weight: 500;
  color: #fff;
  box-shadow: 0 3px 1px -2px rgba(0, 0, 0, .2), 0 2px 2px rgba(0, 0, 0, .14), 0 1px 5px rgba(0, 0, 0, .12);
}

.btn-primary {
  width: 105px;
  background-color: #3f51b5;
}

.btn-accent {
  width: 95px;
  background-color: #ff4081;
}

/* taskbar */
.taskbar {
  height: 50px;
  display: flex;
  align-items: stretch;
  background-color: #1a1a1a;
  color: #fff;
  font-family: "Open Sans", "Liberation Sans", sans-serif;
}

.start {
  width: 60px;
  display: flex;
  align-items: center;
  justify-content: center;
}

.start-ic {
  width: 20px;
  height: 20px;
}

.search {
  width: 430px;
  display: flex;
  align-items: center;
  background-color: #f1f1f1;
  border-top: 1px solid #bdbdbd;
  border-bottom: 1px solid #bdbdbd;
  padding-left: 15px;
  color: #333;
  font-size: 18px;
  overflow: hidden;
}

.search-ic {
  width: 22px;
  height: 22px;
  margin-right: 12px;
}

.search-art {
  width: 95px;
  height: 48px;
  margin-left: auto;
}

.task-cell {
  width: 62px;
  flex: none;
  display: flex;
  align-items: center;
  justify-content: center;
  position: relative;
}

.task-small {
  width: 59px;
}

.task-open::after {
  content: "";
  position: absolute;
  left: 5px;
  right: 5px;
  bottom: 0;
  height: 3px;
  background-color: #76b9ed;
}

.task-active {
  background-color: #4a4a4a;
}

.task-active::after {
  left: 0;
  right: 0;
}

.task-ic {
  width: 30px;
  height: 30px;
}

.task-ic-sm {
  width: 20px;
  height: 20px;
}

.task-sep {
  width: 1px;
  height: 26px;
  margin: 12px 14px 0 10px;
  background-color: #444;
}

.tray {
  margin-left: auto;
  display: flex;
  align-items: center;
  gap: 10px;
  padding-right: 8px;
  font-size: 14px;
}

.help-ic {
  width: 30px;
  height: 30px;
  margin-right: 10px;
}

.leaf-ic {
  width: 28px;
  height: 28px;
}

.air {
  font-size: 17px;
  margin-right: 20px;
}

.tray-ic {
  width: 20px;
  height: 20px;
}

.tray-pen {
  margin-left: 4px;
}

.lang {
  margin-left: 8px;
}

.clock {
  width: 82px;
  margin-left: 6px;
  display: flex;
  flex-direction: column;
  align-items: center;
  line-height: 24px;
}

.notif {
  position: relative;
  width: 22px;
  height: 22px;
  margin-left: 12px;
  margin-right: 18px;
}

.notif-ic {
  width: 22px;
  height: 22px;
  display: block;
}

.notif-badge {
  position: absolute;
  right: -8px;
  bottom: -10px;
  width: 20px;
  height: 20px;
  border-radius: 50%;
  background-color: #333;
  border: 1px solid #888;
  font-size: 12px;
  line-height: 18px;
  text-align: center;
}
```
